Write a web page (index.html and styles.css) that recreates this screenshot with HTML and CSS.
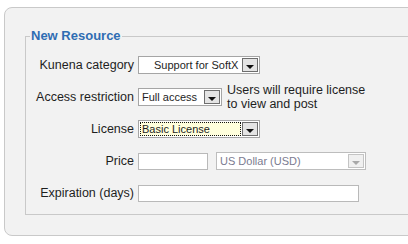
FILE: index.html
```html
<!DOCTYPE html>
<html>
<head>
    <meta charset="utf-8"/>
    <title>New Resource</title>
    <link rel="stylesheet" href="styles.css">
</head>
<body>
    <div class="panel">
        <fieldset class="resource">
            <legend>New Resource</legend>

            <div class="row">
                <label class="label">Kunena category</label>
                <div class="select select-wide">
                    <span class="value indent">Support for SoftX</span>
                    <span class="arrow"></span>
                </div>
            </div>

            <div class="row">
                <label class="label">Access restriction</label>
                <div class="select select-short">
                    <span class="value">Full access</span>
                    <span class="arrow"></span>
                </div>
                <div class="help">Users will require license<br>to view and post</div>
            </div>

            <div class="row">
                <label class="label">License</label>
                <div class="select select-wide focused">
                    <span class="value">Basic License</span>
                    <span class="arrow"></span>
                </div>
            </div>

            <div class="row">
                <label class="label">Price</label>
                <input type="text" class="field field-price">
                <div class="select select-currency disabled">
                    <span class="value">US Dollar (USD)</span>
                    <span class="arrow"></span>
                </div>
            </div>

            <div class="row">
                <label class="label">Expiration (days)</label>
                <input type="text" class="field field-long">
            </div>
        </fieldset>
    </div>
</body>
</html>
```

FILE: styles.css
```css
body {
    margin: 0;
    background-color: #fff;
    font-family: "Liberation Sans", Arial, sans-serif;
    font-size: 12.5px;
    color: #1e1e1e;
    overflow: hidden;
}

/* outer box */
.panel {
    margin: 7px -20px 0 4px;
    padding: 20px 0 20px 20px;
    background-color: #f2f2f2;
    border: 1px solid #c9c9c9;
    border-radius: 8px;
}

.resource {
    margin: 0;
    padding: 0 0 5px 0;
    min-width: 0;
    border: 1px solid #c9c9c9;
}
.resource legend {
    margin-left: 4px;
    padding: 0 1px;
    font-size: 13px;
    font-weight: bold;
    line-height: 16px;
    color: #2f6db3;
}

/* form rows */
.row {
    display: flex;
    align-items: center;
    height: 32px;
}
.row:first-of-type {
    margin-top: 5px;
}
.label {
    width: 108px;
    margin-right: 4px;
    text-align: right;
}
.help {
    margin-left: 5px;
    line-height: 14px;
}

/* selects */
.select {
    display: flex;
    box-sizing: border-box;
    height: 18px;
    padding: 1px;
    background-color: #fff;
    border: 1px solid #a5a5a5;
    font-size: 11px;
}
.select-wide { width: 122px; }
.select-short { width: 84px; }
.select-currency {
    width: 150px;
    margin-left: 8px;
}
.select .value {
    flex: 1;
    padding-left: 2px;
    line-height: 14px;
    white-space: nowrap;
    overflow: hidden;
}
.select .value.indent {
    padding-left: 14px;
}
.select .arrow {
    position: relative;
    box-sizing: border-box;
    width: 16px;
    margin-left: 1px;
    background-color: #e4e4e4;
    border: 1px solid #6e6e6e;
}
.select .arrow::after {
    content: "";
    position: absolute;
    left: 3px;
    top: 6px;
    border-left: 4px solid transparent;
    border-right: 4px solid transparent;
    border-top: 4px solid #111;
}
.select.focused .value {
    background-color: #ffffdc;
    border: 1px dotted #111;
    line-height: 12px;
    padding-left: 1px;
}
.select.disabled {
    border-color: #bdbdbd;
    color: #7b7b90;
}
.select.disabled .arrow {
    background-color: #f0f0f0;
    border-color: #c4c4c4;
}
.select.disabled .arrow::after {
    border-top-color: #a8a8a8;
}

/* text inputs */
.field {
    box-sizing: border-box;
    height: 17px;
    margin: 0;
    padding: 0;
    border: 1px solid #b9b9b9;
    background-color: #fff;
}
.field-price { width: 70px; }
.field-long { width: 221px; }
```
